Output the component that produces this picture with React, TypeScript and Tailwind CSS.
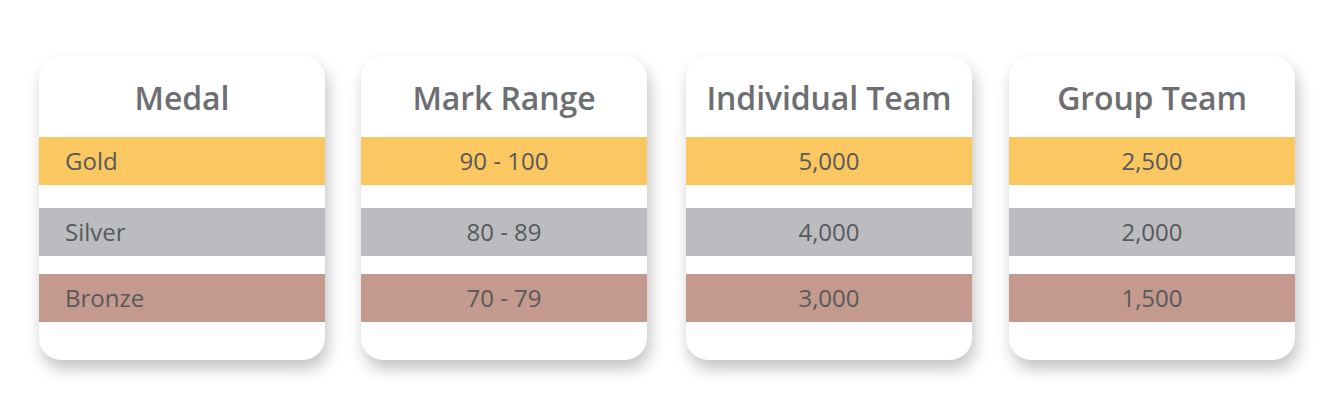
const rows = [
  { name: "Gold", bg: "bg-[#fbc760]" },
  { name: "Silver", bg: "bg-[#bbbcbf]" },
  { name: "Bronze", bg: "bg-[#c49a8e]" },
]

const columns = [
  { title: "Medal", values: ["Gold", "Silver", "Bronze"], left: true, gap: "" },
  { title: "Mark Range", values: ["90 - 100", "80 - 89", "70 - 79"], gap: "ml-[36px]" },
  { title: "Individual Team", values: ["5,000", "4,000", "3,000"], gap: "ml-[39px]" },
  { title: "Group Team", values: ["2,500", "2,000", "1,500"], gap: "ml-[37px]" },
]

function Card({ title, values, left, gap }: { title: string; values: string[]; left?: boolean; gap: string }) {
  return (
    <div
      className={`w-[286px] h-[304px] rounded-[22px] bg-white shadow-[3px_9px_16px_rgba(0,0,0,0.24)] flex flex-col overflow-hidden ${gap}`}
    >
      {/* header */}
      <div className="h-[81px] flex items-center justify-center pt-[2px]">
        <span className="text-[32px] font-semibold text-[#6d6e71] tracking-[-0.1px]">{title}</span>
      </div>
      {values.map((v, i) => (
        <div
          key={v}
          className={`h-[48px] flex items-center text-[24px] text-[#58595b] ${rows[i].bg} ${
            left ? "justify-start pl-[26px]" : "justify-center"
          } ${i === 1 ? "mt-[23px]" : ""} ${i === 2 ? "mt-[18px]" : ""}`}
        >
          {v}
        </div>
      ))}
    </div>
  )
}

export default function App() {
  return (
    <div
      className="w-[1335px] h-[419px] bg-white pt-[56px] pl-[39px] flex"
      style={{ fontFamily: '"Open Sans", "Noto Sans", sans-serif' }}
    >
      {columns.map((c) => (
        <Card key={c.title} title={c.title} values={c.values} left={c.left} gap={c.gap} />
      ))}
    </div>
  )
}
